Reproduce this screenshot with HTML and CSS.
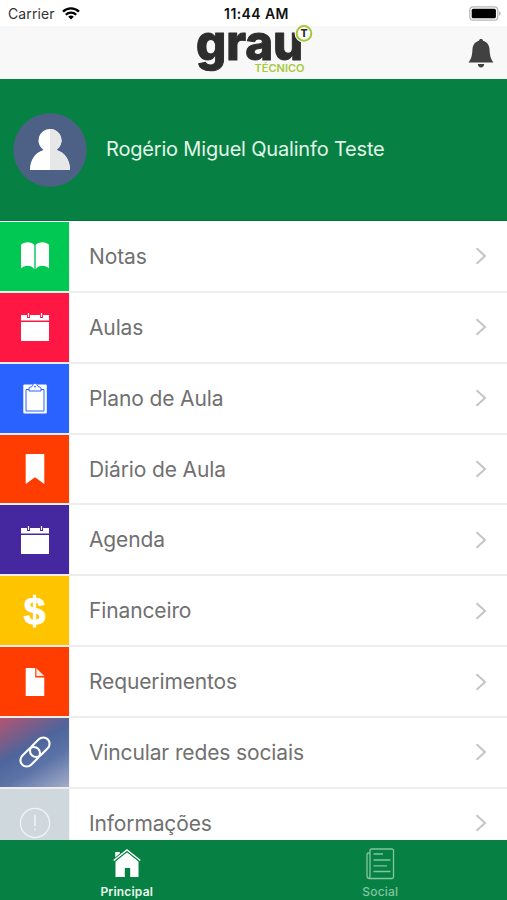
FILE: index.html
```html
<!DOCTYPE html>
<html lang="pt-BR">
<head>
    <meta charset="UTF-8">
    <meta name="viewport" content="width=device-width, initial-scale=1.0">
    <title>Grau Técnico</title>
    <link rel="stylesheet" href="styles.css">
</head>
<body>
    <div class="app">
        <div class="status-bar">
            <div class="status-left">
                <span class="carrier">Carrier</span>
                <svg class="wifi" width="18" height="13" viewBox="0 0 18 13" fill="none" stroke="#000" stroke-width="2.3">
                    <path d="M1 4.6a11.3 11.3 0 0 1 16 0M3.8 7.7a7.4 7.4 0 0 1 10.4 0"/>
                    <path d="M9 12.5L6.2 9.8a4 4 0 0 1 5.6 0z" fill="#000" stroke="none"/>
                </svg>
            </div>
            <span class="status-time">11:44 AM</span>
            <svg class="battery" width="32" height="15" viewBox="0 0 32 15">
                <rect x=".8" y=".8" width="28" height="13.4" rx="3.4" fill="#fff" stroke="#b5b5b5" stroke-width="1.2"/>
                <rect x="2.7" y="2.7" width="24.2" height="9.6" rx="1.5"/>
                <path d="M30.2 5.3q1.4.6 1.4 2.2t-1.4 2.2z" fill="#aaa"/>
            </svg>
        </div>

        <header class="header">
            <svg class="logo" width="118" height="53" viewBox="0 0 118 53">
                <text class="logo-name" x="1" y="34.4" textLength="107" lengthAdjust="spacingAndGlyphs">grau</text>
                <text class="logo-sub" x="59.5" y="46.4" textLength="50" lengthAdjust="spacingAndGlyphs">TÉCNICO</text>
                <circle cx="109" cy="7.4" r="9.4" fill="#f8f8f8"/>
                <circle cx="109" cy="7.4" r="7.3" fill="#fff" stroke="#a6c83a" stroke-width="2"/>
                <text class="logo-badge" x="109" y="11.1" text-anchor="middle">T</text>
            </svg>
            <svg class="bell" width="26" height="29" viewBox="0 0 26 29" fill="#414141">
                <path d="M13 0c1.2 0 1.9.7 2 1.7 4.1 1 6.2 4.2 6.500 8.300.4 6 .8 9.500 4 13.500H.5c3.200-4 3.600-7.500 4-13.500C4.800 5.900 6.900 2.700 11 1.700 11.100.7 11.800 0 13 0z"/>
                <path d="M9.800 25h6.400c-.2 2-1.300 3.500-3.200 3.500S10 27 9.800 25z"/>
            </svg>
        </header>

        <section class="profile">
            <svg class="avatar" width="74" height="74" viewBox="0 0 74 74">
                <circle cx="37" cy="37" r="36.700" fill="#4d6187"/>
                <path d="M37 16a11.500 11.500 0 0 1 6.500 21C52 39.500 57 47 57 57H17c0-10 5-17.500 13.500-20A11.500 11.500 0 0 1 37 16z" fill="#fff"/>
                <path d="M37 16a11.500 11.500 0 0 1 6.500 21C52 39.500 57 47 57 57H37z" fill="#e7e7e7"/>
            </svg>
            <span class="profile-name">Rogério Miguel Qualinfo Teste</span>
        </section>

        <main class="menu">
            <a class="menu-item">
                <span class="tile tile-green"><svg width="30" height="30" viewBox="0 0 30 30" fill="#fff"><path d="M14.300 3.800C11.500.4 4 .4 1 3.800V27.500c3.500-3.800 10.500-3.800 13.300.7zM15.700 3.800C18.500.4 26 .4 29 3.800V27.500c-3.500-3.800-10.500-3.800-13.300.7z"/></svg></span>
                <span class="label">Notas</span>
                <svg class="chevron" viewBox="0 0 12 18"><path d="M1.500 1.200L10 9l-8.500 7.800"/></svg>
            </a>
            <a class="menu-item">
                <span class="tile tile-red"><svg width="30" height="30" viewBox="0 0 30 30" fill="#fff"><path d="M1 3h6v3h3V3h10v3h3V3h6v5.500H1zM7.900 1h1.200v4H7.900zM20.900 1h1.200v4h-1.200zM1 10h28v19H1z"/></svg></span>
                <span class="label">Aulas</span>
                <svg class="chevron" viewBox="0 0 12 18"><path d="M1.500 1.200L10 9l-8.500 7.800"/></svg>
            </a>
            <a class="menu-item">
                <span class="tile tile-blue"><svg width="30" height="32" viewBox="0 0 30 32"><rect x="3.300" y="2.500" width="23.500" height="29" rx="1" fill="#fff"/><path d="M6 7.500h18V29H6z" fill="#fff" stroke="#2962ff"/><path d="M9 9V6.500c0-1.500 2-1.500 3-2 .8-.5.8-3.300 3-3.300s2.200 2.800 3 3.300c1 .5 3 .5 3 2V9z" fill="#fff" stroke="#2962ff"/><circle cx="15" cy="4.600" r=".9" fill="#2962ff"/></svg></span>
                <span class="label">Plano de Aula</span>
                <svg class="chevron" viewBox="0 0 12 18"><path d="M1.500 1.200L10 9l-8.500 7.800"/></svg>
            </a>
            <a class="menu-item">
                <span class="tile tile-orange"><svg width="30" height="30" viewBox="0 0 30 30" fill="#fff"><path d="M5.700 0h18.600v30L15 23.300 5.700 30z"/></svg></span>
                <span class="label">Diário de Aula</span>
                <svg class="chevron" viewBox="0 0 12 18"><path d="M1.500 1.200L10 9l-8.500 7.800"/></svg>
            </a>
            <a class="menu-item">
                <span class="tile tile-purple"><svg width="30" height="30" viewBox="0 0 30 30" fill="#fff"><path d="M1 3h6v3h3V3h10v3h3V3h6v5.500H1zM7.900 1h1.200v4H7.900zM20.900 1h1.200v4h-1.200zM1 10h28v19H1z"/></svg></span>
                <span class="label">Agenda</span>
                <svg class="chevron" viewBox="0 0 12 18"><path d="M1.500 1.200L10 9l-8.500 7.800"/></svg>
            </a>
            <a class="menu-item">
                <span class="tile tile-yellow"><span class="dollar">$</span></span>
                <span class="label">Financeiro</span>
                <svg class="chevron" viewBox="0 0 12 18"><path d="M1.500 1.200L10 9l-8.500 7.800"/></svg>
            </a>
            <a class="menu-item">
                <span class="tile tile-orange"><svg width="30" height="30" viewBox="0 0 30 30" fill="#fff"><path d="M5.700 1h9.500v9.500h9.100V29H5.700z"/><path d="M16.400 1.200l7.900 7.900h-7.900z" fill="#ffe9e1"/></svg></span>
                <span class="label">Requerimentos</span>
                <svg class="chevron" viewBox="0 0 12 18"><path d="M1.500 1.200L10 9l-8.500 7.800"/></svg>
            </a>
            <a class="menu-item">
                <span class="tile tile-social"><svg width="32" height="32" viewBox="0 0 32 32" fill="none" stroke="#fff" stroke-width="2.100"><g transform="rotate(-45 16 16)"><rect x="-2" y="9.700" width="22.500" height="12.600" rx="6.300"/><rect x="11.500" y="9.700" width="22.500" height="12.600" rx="6.300"/></g></svg></span>
                <span class="label">Vincular redes sociais</span>
                <svg class="chevron" viewBox="0 0 12 18"><path d="M1.500 1.200L10 9l-8.500 7.800"/></svg>
            </a>
            <a class="menu-item">
                <span class="tile tile-gray"><svg width="32" height="32" viewBox="0 0 32 32" fill="none" stroke="#f1f4f5" stroke-width="1.300"><circle cx="16" cy="16" r="14.600"/><path d="M16 8v11M16 21.500v2" stroke-width="1.600"/></svg></span>
                <span class="label">Informações</span>
                <svg class="chevron" viewBox="0 0 12 18"><path d="M1.500 1.200L10 9l-8.500 7.800"/></svg>
            </a>
        </main>

        <nav class="tab-bar">
            <a class="tab active">
                <svg width="30" height="32" viewBox="0 0 30 32"><path d="M3.500 13.500L15 4.300l11.500 9.200V29h-8.300v-9h-5.400v9H3.500z" fill="#fff"/><path d="M3.200 10V4h4.600v3z" fill="#fff"/><path d="M1.700 12.500L15 2l13.300 10.500" fill="none" stroke="#078143" stroke-width="3.200"/><path d="M1.700 12.500L15 2l13.300 10.500" fill="none" stroke="#fff" stroke-width="1.500"/></svg>
                <span>Principal</span>
            </a>
            <a class="tab">
                <svg width="30" height="32" viewBox="0 0 30 32" fill="none" stroke="#83c5a1" stroke-width="1.300"><path d="M5 5H3.500Q2 5 2 6.500V28q0 2.500 2.500 2.500H27q1.500 0 1.500-1.500V2.500Q28.500 1 27 1H6.500Q5 1 5 2.500V28q0 1.500-1.200 2"/><path d="M8.500 6H18M8.500 12h17M8.500 17.800H22M8.500 23.500h17"/></svg>
                <span>Social</span>
            </a>
        </nav>
    </div>
</body>
</html>
```

FILE: styles.css
```css
* {
    margin: 0;
    padding: 0;
    box-sizing: border-box;
}

body {
    font-family: 'Inter', 'Liberation Sans', sans-serif;
    background: #fff;
}

svg {
    display: block;
    flex-shrink: 0;
}

.app {
    display: flex;
    flex-direction: column;
    height: 900px;
    overflow: hidden;
}

.status-bar {
    display: grid;
    grid-template-columns: 1fr auto 1fr;
    align-items: center;
    height: 26px;
    padding: 1px 6px 0 8px;
    flex-shrink: 0;
}

.status-left {
    display: flex;
    align-items: center;
    gap: 7px;
}

.carrier {
    font-size: 14px;
    letter-spacing: 0.1px;
    color: #333;
}

.status-time {
    padding-left: 4px;
    font-size: 14px;
    font-weight: 600;
    letter-spacing: 0.4px;
    line-height: 17px;
    color: #111;
}

.battery {
    justify-self: end;
}

.header {
    display: grid;
    grid-template-columns: 1fr 118px 1fr;
    height: 53px;
    background: #f8f8f8;
    flex-shrink: 0;
}

.logo {
    grid-column: 2;
    overflow: visible;
}

.logo-name {
    font-size: 49px;
    font-weight: 800;
    fill: #2d2d2d;
    stroke: #2d2d2d;
    stroke-width: 1;
    stroke-linejoin: round;
}

.logo-sub {
    font-size: 10px;
    font-weight: 600;
    fill: #a6c83a;
}

.logo-badge {
    font-size: 10.5px;
    font-weight: 800;
    fill: #2d2d2d;
}

.bell {
    justify-self: end;
    margin: 13px 13px 0 0;
}

.profile {
    display: flex;
    align-items: center;
    gap: 19px;
    height: 142px;
    padding: 0 13px;
    background: #078143;
    border-bottom: 1px solid #08713c;
    flex-shrink: 0;
}

.profile-name {
    padding-bottom: 1px;
    font-size: 20px;
    letter-spacing: -0.18px;
    color: #e2f5e9;
    white-space: nowrap;
}

.menu {
    flex: 1;
    min-height: 0;
    overflow: hidden;
    padding-top: 1px;
}

.menu-item {
    display: flex;
    align-items: center;
    height: 70.86px;
    padding-right: 20px;
    border-bottom: 2px solid #ededed;
}

.tile {
    display: flex;
    align-items: center;
    justify-content: center;
    width: 70px;
    height: 100%;
    border-right: 1px solid #f3f3f3;
}

.tile-green { background: #00c853; }
.tile-red { background: #ff1744; }
.tile-blue { background: #2962ff; }
.tile-orange { background: #ff3d00; }
.tile-purple { background: #4527a0; }
.tile-yellow { background: #ffc400; }
.tile-gray { background: #cfd8dc; }

.tile-social {
    background: linear-gradient(150deg, #b45470 0%, #4d659c 42%, #5c73a7 65%, #a4adca 100%);
}

.dollar {
    font-family: 'Liberation Sans', sans-serif;
    font-size: 39px;
    font-weight: bold;
    line-height: 1;
    color: #fff;
    -webkit-text-stroke: 0.9px #fff;
}

.label {
    flex: 1;
    padding-left: 19px;
    font-size: 21px;
    letter-spacing: -0.13px;
    color: #707070;
    white-space: nowrap;
}

.chevron {
    width: 12px;
    height: 18px;
    fill: none;
    stroke: #c5c5c7;
    stroke-width: 2;
}

.tab-bar {
    display: grid;
    grid-template-columns: 1fr 1fr;
    height: 60px;
    background: #078143;
    flex-shrink: 0;
}

.tab {
    display: flex;
    flex-direction: column;
    align-items: center;
    padding-top: 8px;
    gap: 4px;
    font-size: 12px;
    font-weight: 500;
    letter-spacing: 0.2px;
    line-height: 15px;
    color: #83c5a1;
}

.tab.active {
    color: #e9f7ee;
    font-weight: 600;
}
```
